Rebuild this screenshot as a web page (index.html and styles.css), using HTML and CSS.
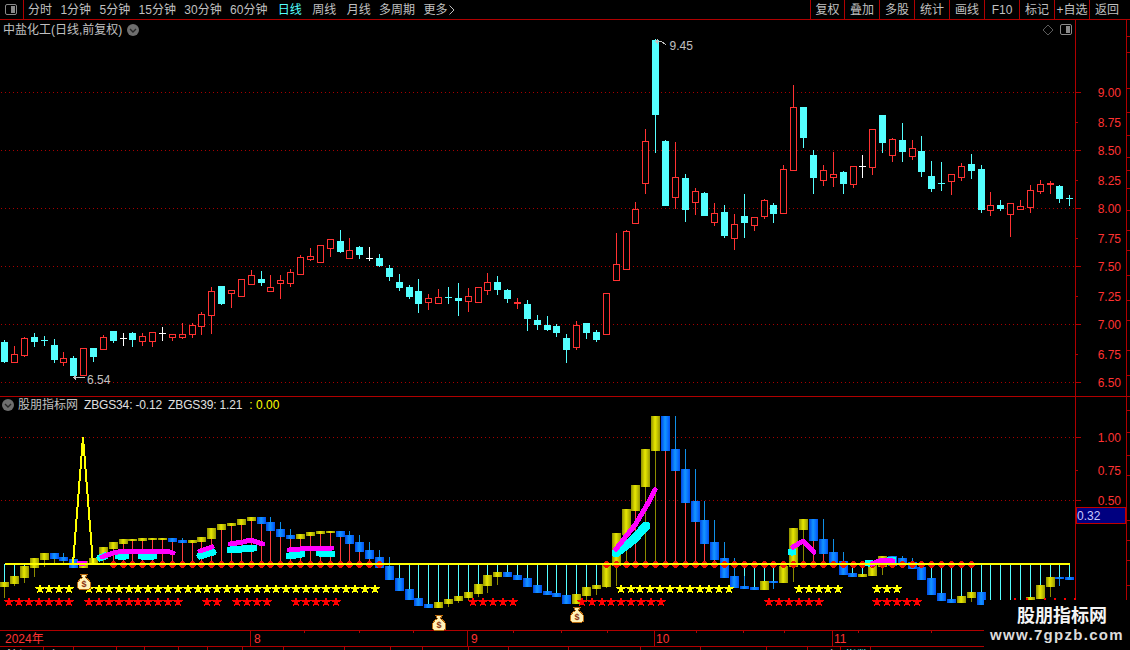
FILE: index.html
```html
<!DOCTYPE html>
<html lang="zh-CN">
<head>
<meta charset="utf-8">
<title>中盐化工 日线</title>
<link rel="stylesheet" href="styles.css">
</head>
<body>
<div class="app">
  <header class="toolbar">
    <button class="toggle-btn" aria-label="toggle">
      <svg class="box-icon" width="12" height="11" viewBox="0 0 12 11"><rect x="0.5" y="0.5" width="11" height="10" rx="1.5" class="box-frame"/><rect x="6" y="2" width="4" height="7" class="box-fill"/></svg>
    </button>
    <nav class="periods">
      <span>分时</span><span>1分钟</span><span>5分钟</span><span>15分钟</span><span>30分钟</span><span>60分钟</span>
      <span class="active">日线</span><span class="wide">周线</span><span class="wide">月线</span><span>多周期</span><span class="more">更多<svg class="more-arrow" width="6" height="10" viewBox="0 0 6 10"><path d="M0.5 0.5L5 5L0.5 9.5"/></svg></span>
    </nav>
    <div class="tools">
      <span class="tool">复权</span><span class="tool">叠加</span><span class="tool">多股</span><span class="tool">统计</span><span class="tool">画线</span><span class="tool">F10</span><span class="tool">标记</span><span class="tool">+自选</span><span class="tool">返回</span>
    </div>
  </header>
  <main class="stage">
    <svg id="chart" class="chart" width="1130" height="630" viewBox="0 20 1130 630"></svg>
    <section class="panel panel-price">
      <div class="panel-head">
        <span class="title">中盐化工(日线,前复权)</span>
        <svg class="chev" width="12" height="12" viewBox="0 0 12 12"><circle cx="6" cy="6" r="6" class="chev-bg"/><path d="M3 5l3 3 3-3" class="chev-line"/></svg>
        <span class="corner">
          <svg width="12" height="12" viewBox="0 0 12 12"><path d="M6 1l5 5-5 5-5-5z" class="diamond"/></svg>
          <svg class="box-icon" width="12" height="11" viewBox="0 0 12 11"><rect x="0.5" y="0.5" width="11" height="10" rx="1.5" class="box-frame"/><rect x="6" y="2" width="4" height="7" class="box-fill"/></svg>
        </span>
      </div>
    </section>
    <section class="panel panel-ind">
      <div class="panel-head head-ind">
        <svg class="chev" width="12" height="12" viewBox="0 0 12 12"><circle cx="6" cy="6" r="6" class="chev-bg"/><path d="M3 5l3 3 3-3" class="chev-line"/></svg>
        <span class="title">股朋指标网</span>
        <span class="metric">ZBGS34: -0.12</span>
        <span class="metric">ZBGS39: 1.21</span>
        <span class="metric-y">: 0.00</span>
      </div>
    </section>
    <aside class="watermark">
      <div class="wm-cn">股朋指标网</div>
      <div class="wm-en">www.7gpzb.com</div>
    </aside>
  </main>
</div>
<script src="chart.js"></script>
</body>
</html>
```
FILE: styles.css
```css
* { box-sizing: border-box; }
html, body { margin: 0; padding: 0; background: #000; }
body { width: 1130px; height: 650px; overflow: hidden; font: 12px/1 "Liberation Sans", "Noto Sans CJK SC", sans-serif; color: #c0c0c0; }
.app { display: flex; flex-direction: column; height: 650px; }

.toolbar { display: flex; align-items: stretch; height: 20px; border-bottom: 1px solid #b00000; flex: none; }
.toggle-btn { width: 24px; padding: 0 0 0 5px; display: flex; align-items: center; background: none; border: 0; border-right: 1px solid #b00000; }
.box-frame { fill: none; stroke: #8a8a8a; }
.box-fill { fill: #8a8a8a; }
.periods { display: flex; align-items: center; gap: 8.4px; padding-left: 4px; white-space: nowrap; }
.periods .active { color: #54ffff; margin-left: 2px; }
.periods .wide { margin-left: 2px; }
.more { display: flex; align-items: center; gap: 2px; }
.more-arrow path { fill: none; stroke: #c0c0c0; }
.tools { display: flex; margin-left: auto; }
.tool { width: 35px; border-left: 1px solid #b00000; display: flex; align-items: center; justify-content: center; white-space: nowrap; }
.tool:first-child { width: 34px; }
.tool:last-child { width: 41px; padding-right: 6px; }

.stage { position: relative; height: 630px; overflow: hidden; }
.chart { position: absolute; left: 0; top: 0; shape-rendering: crispEdges; }
.panel { position: relative; }
.panel-price { height: 376px; }
.panel-ind { height: 254px; }
.panel-head { display: flex; align-items: center; height: 19px; padding: 0 58px 0 3px; gap: 5px; }
.head-ind { padding-left: 2px; gap: 4px; height: 18px; }
.chev-bg { fill: #6e6e6e; }
.chev-line { fill: none; stroke: #262626; stroke-width: 1.4; }
.diamond { fill: none; stroke: #5c5c5c; }
.chev { flex: none; }
.corner { margin-left: auto; display: flex; align-items: center; gap: 6px; }
.metric { color: #e0e0e0; letter-spacing: -.15px; margin-left: 2px; }
.metric-y { color: #ffff00; margin-left: 3px; }

.watermark { position: absolute; right: 0; bottom: 0; width: 146px; height: 50px; background: #000; display: flex; flex-direction: column; align-items: center; color: #f4f4f4; }
.wm-cn { font: 700 18px/22px "Noto Sans CJK SC", sans-serif; padding: 3px 0 0 10px; }
.wm-en { font: 700 15px/17px "Liberation Sans", sans-serif; letter-spacing: 1.3px; color: #dcdcdc; padding-top: 1px; }

.t-axis { font: 12px "Liberation Sans", sans-serif; fill: #ff3232; text-anchor: end; dominant-baseline: central; shape-rendering: auto; }
.t-date { font: 12px "Liberation Sans", "Noto Sans CJK SC", sans-serif; fill: #ff3232; dominant-baseline: central; }
.t-mark { font: 12px "Liberation Sans", sans-serif; fill: #c0c0c0; dominant-baseline: central; }
.t-box { font: 12px "Liberation Sans", sans-serif; fill: #c8c8ff; dominant-baseline: central; }
.t-status { font: 12px "Noto Sans CJK SC", sans-serif; fill: #e8e8e8; }
.t-status-c { font: 12px "Noto Sans CJK SC", sans-serif; fill: #54ffff; }
.t-bag { font: 700 9px "Liberation Sans", sans-serif; fill: #8c3210; text-anchor: middle; dominant-baseline: central; }
.grid { stroke: #a80000; stroke-dasharray: 1 3; fill: none; }
.frame { stroke: #b00000; fill: none; }
.box-val { fill: #000080; stroke: #c00000; }
.arrow { stroke: #c0c0c0; fill: none; }
.bag { fill: #fff2b8; stroke: #b86a10; stroke-width: 1; }
.spike { fill: none; stroke: #ffff00; stroke-width: 2; }
.mag { fill: none; stroke: #ff00ff; stroke-linecap: round; stroke-linejoin: round; stroke-width: 5; }
.cya { fill: none; stroke: #00ffff; stroke-linecap: round; stroke-linejoin: round; stroke-width: 7; }
.cya-wide { stroke-width: 9; }
.c-cyan { fill: #54ffff; }
.c-red { fill: #ff3232; }
.c-white { fill: #ffffff; }
.c-hollow { fill: #000; stroke: #ff3232; }
.c-base { fill: #ffff00; }
.c-dot { fill: #f01000; }
.star-y { fill: #ffff00; }
.star-r { fill: #ff0000; }
.s-red { fill: #ff3c3c; }
.s-cyan { fill: #54ffff; }
.s-olive { fill: #8c8c00; }
.s-blue { fill: #1090e8; }
```
FILE: chart.js
```js
// x, bodyTop, bodyBottom, high, low, type (c cyan, r red hollow, w white cross, d cyan cross, R red cross)
var candles = [
[4,342,361,340,362,'c'],[14,354,362,346,362,'r'],[24,338,355,337,356,'r'],[34,337,341,333,346,'c'],[44,340,341,336,345,'d'],
[54,345,359,339,362,'c'],[63,358,362,352,365,'r'],[73,358,375,356,375,'c'],[83,348,375,348,375,'r'],[93,348,356,348,361,'c'],
[103,337,349,335,349,'r'],[113,331,340,331,342,'c'],[123,338,339,333,345,'w'],[132,333,339,332,346,'c'],[142,336,341,333,345,'r'],
[152,332,341,332,346,'r'],[162,333,334,327,340,'w'],[172,334,337,334,340,'r'],[182,334,337,323,338,'r'],[192,325,334,323,337,'r'],
[201,314,326,312,334,'r'],[211,291,315,287,333,'r'],[221,286,303,286,304,'c'],[231,290,293,290,307,'r'],[241,279,296,279,296,'r'],
[251,275,284,270,284,'r'],[261,279,282,271,285,'c'],[270,287,291,275,291,'r'],[280,280,283,275,298,'r'],[290,272,283,269,286,'r'],
[300,257,274,255,274,'r'],[310,256,259,248,260,'r'],[320,245,262,245,262,'r'],[330,239,248,239,256,'r'],[340,241,251,230,252,'c'],
[349,250,258,238,258,'r'],[359,247,254,246,258,'c'],[369,258,259,247,260,'w'],[379,258,265,254,266,'c'],[389,268,276,265,280,'c'],
[399,282,287,274,290,'c'],[409,287,296,285,298,'c'],[418,291,303,279,312,'c'],[428,298,302,294,309,'r'],[438,297,303,289,303,'r'],
[448,297,298,287,303,'d'],[458,298,300,283,315,'c'],[468,296,301,288,311,'r'],[478,287,302,287,302,'r'],[487,282,290,273,294,'r'],
[497,282,289,276,294,'c'],[507,290,298,289,302,'c'],[517,302,304,298,308,'R'],[527,304,318,300,330,'c'],[537,320,324,315,329,'c'],
[547,325,329,316,330,'c'],[556,326,332,324,336,'c'],[566,338,349,334,362,'c'],[576,325,347,321,349,'r'],[586,323,332,323,338,'c'],
[596,332,339,330,341,'c'],[606,293,334,293,334,'r'],[616,264,280,233,280,'r'],[626,231,269,230,269,'r'],[635,209,223,202,223,'r'],
[645,141,183,129,193,'r'],[655,40,114,39,152,'c'],[665,141,205,140,205,'c'],[675,177,197,142,208,'r'],[685,178,209,174,221,'c'],
[695,191,202,188,214,'r'],[704,193,215,192,215,'c'],[714,213,222,203,225,'r'],[724,212,235,205,237,'c'],[734,224,238,214,249,'r'],
[744,216,222,194,237,'c'],[754,217,225,217,230,'r'],[764,200,216,199,218,'r'],[773,205,213,203,222,'c'],[783,169,213,165,213,'r'],
[793,107,170,85,170,'r'],[803,107,137,107,147,'c'],[813,155,177,150,193,'c'],[823,170,180,165,185,'r'],[833,174,177,152,186,'r'],
[843,172,183,171,193,'c'],[853,166,184,166,187,'r'],[862,166,167,155,177,'w'],[872,129,167,129,174,'r'],[882,115,142,115,152,'c'],
[892,139,155,138,161,'r'],[902,140,151,123,161,'c'],[912,148,156,140,159,'r'],[921,151,171,136,176,'c'],[931,176,188,161,191,'c'],
[941,183,184,162,190,'d'],[951,174,181,174,194,'r'],[961,166,177,163,180,'r'],[971,164,170,154,178,'c'],[981,169,209,165,212,'c'],
[990,205,210,192,215,'r'],[1000,205,208,200,210,'c'],[1010,203,214,203,236,'r'],[1020,206,209,200,209,'r'],[1030,190,207,185,212,'r'],
[1040,184,191,180,193,'r'],[1050,183,185,181,193,'R'],[1059,186,198,185,202,'c'],[1069,198,199,195,205,'d']
];

// x, top, bottom, kind (o olive, b blue), high, low
var bars = [
[4,582,586,'o',582,597],[14,576,583,'o',576,585],[24,566,577,'o',566,582],[34,558,567,'o',558,576],[44,553,559,'o',553,566],
[54,553,558,'b',553,558],[63,557,560,'b',553,560],[73,559,567,'b',559,567],[83,561,567,'o',561,567],[93,558,562,'o',558,562],
[103,547,555,'o',547,564],[113,542,548,'o',542,548],[123,539,543,'o',539,543],[132,539,540,'o',539,540],[142,538,540,'o',538,540],
[152,538,539,'o',538,539],[162,538,539,'o',538,539],[172,538,541,'b',538,541],[182,540,542,'b',538,542],[192,540,542,'o',540,542],
[201,537,541,'o',537,541],[211,528,538,'o',528,538],[221,524,529,'o',524,529],[231,523,525,'o',523,525],[241,519,524,'o',519,524],
[251,517,520,'o',517,520],[261,517,523,'b',517,523],[270,522,530,'b',517,530],[280,529,536,'b',522,536],[290,535,538,'b',529,538],
[300,534,538,'o',534,538],[310,532,535,'o',532,535],[320,531,533,'o',531,533],[330,531,532,'o',531,532],[340,531,536,'b',531,536],
[349,535,543,'b',531,543],[359,542,551,'b',535,551],[369,550,558,'b',542,558],[379,557,567,'b',550,567],[389,566,579,'b',557,579],
[399,578,590,'b',578,590],[409,589,599,'b',589,599],[418,598,605,'b',598,605],[428,604,607,'b',604,607],[438,602,607,'o',602,607],
[448,599,603,'o',599,606],[458,596,600,'o',596,602],[468,592,597,'o',592,599],[478,584,593,'o',584,596],[487,575,585,'o',575,592],
[497,572,576,'o',572,584],[507,572,576,'b',572,576],[517,575,579,'b',575,579],[527,578,586,'b',578,586],[537,585,592,'b',585,592],
[547,591,594,'b',591,594],[556,593,596,'b',593,596],[566,595,603,'b',595,603],[576,594,603,'o',594,603],[586,587,595,'o',587,601],
[596,585,588,'o',585,594],[606,565,586,'o',565,587],[616,533,565,'o',533,585],[626,509,534,'o',509,534],[635,485,510,'o',485,510],
[645,449,486,'o',449,486],[655,416,450,'o',416,450],[665,416,450,'b',416,450],[675,449,470,'b',416,470],[685,469,502,'b',449,502],
[695,501,521,'b',469,521],[704,520,543,'b',501,543],[714,542,559,'b',520,559],[724,558,577,'b',542,577],[734,576,587,'b',558,587],
[744,586,588,'b',576,588],[754,587,589,'b',587,589],[764,581,589,'o',581,589],[773,581,582,'b',581,588],[783,566,582,'o',566,582],
[793,528,566,'o',528,581],[803,519,529,'o',519,529],[813,519,540,'b',519,540],[823,539,553,'b',519,553],[833,552,562,'b',539,562],
[843,561,574,'b',552,574],[852,573,576,'b',573,576],[862,574,576,'o',574,576],[872,565,575,'o',565,575],[882,556,566,'o',556,574],
[892,556,565,'b',556,565],[902,558,563,'b',556,563],[912,562,568,'b',558,568],[921,567,579,'b',567,579],[931,578,594,'b',578,594],
[941,593,600,'b',593,600],[951,599,602,'b',599,602],[961,596,602,'o',596,602],[971,592,597,'o',592,601],[981,592,604,'b',592,604],
[990,601,620,'b',601,620],[1000,601,620,'b',601,620],[1010,601,620,'b',601,620],[1020,601,620,'b',601,620],[1030,597,612,'o',597,612],
[1040,585,598,'o',585,598],[1050,577,586,'o',577,596],[1059,577,578,'b',577,585],[1069,577,579,'b',577,579]
];

var oliveStems = {616:1,626:1,645:1,655:1,783:1,793:1,803:1,606:1};
var out = [];

function rect(x, y, w, h, cls) { out.push('<rect x="'+x+'" y="'+y+'" width="'+w+'" height="'+h+'" class="'+cls+'"/>'); }
function hline(x1, x2, y, cls) { out.push('<line x1="'+x1+'" x2="'+x2+'" y1="'+(y+.5)+'" y2="'+(y+.5)+'" class="'+cls+'"/>'); }
function vline(x, y1, y2, cls) { out.push('<line x1="'+(x+.5)+'" x2="'+(x+.5)+'" y1="'+y1+'" y2="'+y2+'" class="'+cls+'"/>'); }
function text(x, y, s, cls) { out.push('<text x="'+x+'" y="'+y+'" class="'+cls+'">'+s+'</text>'); }
function poly(pts, cls) { out.push('<polyline points="'+pts+'" class="'+cls+'"/>'); }

function star(cx, cy, cls) {
  var p = [];
  for (var i = 0; i < 10; i++) {
    var r = i % 2 ? 2.3 : 5, a = -Math.PI / 2 + i * Math.PI / 5;
    p.push((cx + r * Math.cos(a)).toFixed(1) + ',' + (cy + r * Math.sin(a)).toFixed(1));
  }
  out.push('<polygon points="' + p.join(' ') + '" class="' + cls + '"/>');
}

function bag(cx, cy) {
  out.push('<g transform="translate('+cx+' '+cy+')"><path class="bag" d="M-3.5 -8H3.5L1.5 -4.5C5 -2.5 7 1 7 4C7 7 4 8 0 8C-4 8 -7 7 -7 4C-7 1 -5 -2.5 -1.5 -4.5Z"/><text x="0" y="2" class="t-bag">$</text></g>');
}

out.push('<defs>'
 + '<linearGradient id="gOlive"><stop offset="0" stop-color="#8f8f00"/><stop offset=".45" stop-color="#e8e800"/><stop offset=".7" stop-color="#c4c400"/><stop offset="1" stop-color="#969600"/></linearGradient>'
 + '<linearGradient id="gBlue"><stop offset="0" stop-color="#0046e6"/><stop offset=".45" stop-color="#1496ff"/><stop offset=".7" stop-color="#0a78ff"/><stop offset="1" stop-color="#0050f0"/></linearGradient>'
 + '</defs>');

// grid
[92,150,208,266,324,382,437,500].forEach(function (y) { hline(1, 1075, y, 'grid'); });

// frame
hline(0, 1130, 396, 'frame');
hline(0, 1130, 630, 'frame');
hline(0, 1130, 646, 'frame');
vline(1075, 20, 630, 'frame');
vline(1126, 20, 630, 'frame');

// axis
[['9.00',92,1],['8.75',122,0],['8.50',150,1],['8.25',180,0],['8.00',208,1],['7.75',238,0],['7.50',266,1],['7.25',296,0],['7.00',324,1],['6.75',354,0],['6.50',382,1],
 ['1.00',437,1],['0.75',470,0],['0.50',500,1]].forEach(function (a) {
  hline(1075, a[2] ? 1081 : 1078, a[1], 'frame');
  text(1121, a[1] + .5, a[0], 't-axis');
});
[36,52,88,112,135,157,170,188,210,230,250,275,300,320,350,375,410,432,455,475,520,540,560,585,600,615].forEach(function (y) { hline(1126, 1130, y, 'frame'); });
out.push('<rect x="1076.5" y="507.5" width="49" height="16" class="box-val"/>');
text(1077, 515.5, '0.32', 't-box');

// time axis
[[250,'8',254],[467,'9',471],[654,'10',656],[832,'11',834]].forEach(function (m) {
  vline(m[0], 630, 646, 'frame');
  text(m[2], 638.5, m[1], 't-date');
});
text(5, 638.5, '2024年', 't-date');
[304,359,413,513,561,607,696,743,784,858,931,1003].forEach(function (x) { vline(x, 630, 633, 'frame'); });
[43,73,116,144,178,207,242,283,344,390,422,468,508,568,640,700,766,807,840,870].forEach(function (x) { vline(x, 646, 650, 'frame'); });
text(7, 660, '沪深', 't-status');
text(48, 660, '上', 't-status');
text(826, 660, '上', 't-status');
text(845, 660, '指数', 't-status-c');

// candles
candles.forEach(function (c) {
  var x = c[0], t = c[1], b = c[2], hi = c[3], lo = c[4], k = c[5];
  var fill = {c:'c-cyan', d:'c-cyan', r:'c-red', R:'c-red', w:'c-white'}[k];
  rect(x, hi, 1, lo - hi + 1, fill);
  if (k === 'c') rect(x - 3, t, 7, b - t + 1, fill);
  else if (k === 'r') out.push('<rect x="'+(x-2.5)+'" y="'+(t+.5)+'" width="6" height="'+(b-t)+'" class="c-hollow"/>');
  else rect(x - 3, t, 7, k === 'R' ? 2 : 1, fill);
});

// price markers
out.push('<path class="arrow" d="M74 377.5H85M76 375.5L74 377.5L76 379.5"/>');
text(87, 379.5, '6.54', 't-mark');
out.push('<path class="arrow" d="M656 41.5H661L666 44.5M658 39.5L656 41.5L658 43.5"/>');
text(669.5, 45.5, '9.45', 't-mark');

// indicator stems and bars
bars.forEach(function (b) {
  var x = b[0], t = b[1], e = b[2], k = b[3], hi = b[4], lo = b[5];
  if (t > 564) rect(x, 564, 1, t - 564, 's-cyan');
  else if (e < 564) rect(x, e, 1, 564 - e, (x < 113 || oliveStems[x]) ? 's-olive' : 's-red');
  rect(x, hi, 1, lo - hi + 1, k === 'o' ? 's-olive' : 's-blue');
});
bars.forEach(function (b) {
  out.push('<rect x="'+(b[0]-4)+'" y="'+b[1]+'" width="9" height="'+(b[2]-b[1]+1)+'" fill="url(#'+(b[3]==='o'?'gOlive':'gBlue')+')"/>');
});

// dots on the base line
candles.forEach(function (c) {
  var x = c[0];
  if ((x >= 113 && x <= 380) || (x >= 606 && x <= 971)) out.push('<circle cx="'+(x+.5)+'" cy="564.5" r="3.4" class="c-dot"/>');
});

// thick strokes
['100,558 105,556','118,556 126,556','141,556 154,556','200,556 213,552','230,550 254,548','289,556 302,554','319,553 332,554',
 '791,552 793,552','868,563 870,563','890,560 893,560'].forEach(function (p) { poly(p, 'cya'); });
poly('616,553 633,540 646,526', 'cya cya-wide');
['102,557 113,553 123,551 167,551 173,553','200,551 212,547','230,544 243,542 250,540 263,544','289,550 300,549 317,548 332,548',
 '79,563 85,563','616,549 635,525 647,505 655,490','793,547 803,541 814,552','872,564 882,560 893,561'].forEach(function (p) { poly(p, 'mag'); });

// base line and spike
rect(5, 563, 1065, 2, 'c-base');
poly('5,564 73,564 83,437 93,564', 'spike');

// stars
[40,49,59,69,89,99,109,119,129,138,148,158,168,178,188,198,207,217,227,237,247,257,267,276,286,296,306,316,326,336,346,355,365,375,
 621,631,640,650,660,670,680,690,700,709,719,729,799,809,819,828,838,877,887,897].forEach(function (x) { star(x, 589, 'star-y'); });
[9,19,29,39,49,59,69,89,99,109,119,129,138,148,158,168,178,207,217,237,247,257,267,296,306,316,326,336,473,483,493,503,513,
 582,592,602,611,621,631,641,651,661,769,779,789,799,809,819,877,887,897,907,917,1015,1027,1045,1055,1065,1075].forEach(function (x) { star(x, 602, 'star-r'); });

bag(84, 582); bag(439, 623); bag(577, 615);

document.getElementById('chart').innerHTML = out.join('');
```
